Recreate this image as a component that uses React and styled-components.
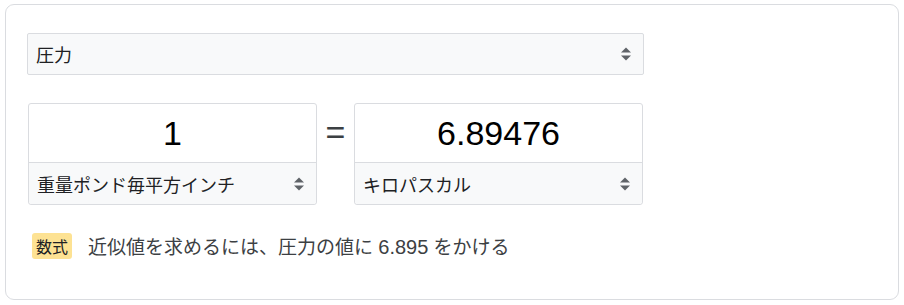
import React from "react"
import styled, { createGlobalStyle } from "styled-components"

const GlobalStyle = createGlobalStyle`
  body {
    margin: 0;
    background: #fff;
    font-family: "Liberation Sans", Arial, "Noto Sans CJK JP", sans-serif;
    color: #202124;
  }
`

const Card = styled.div`
  box-sizing: border-box;
  width: 894px;
  height: 296px;
  margin: 4px 0 0 5px;
  border: 1px solid #dadce0;
  border-radius: 9px;
  padding: 28px 21px 0 21px;
`

const SelectBox = styled.div`
  box-sizing: border-box;
  display: flex;
  align-items: center;
  justify-content: space-between;
  width: ${(p) => p.$width || "100%"};
  height: ${(p) => p.$height}px;
  padding: 0 12px 0 8px;
  background: #f8f9fa;
  border: 1px solid #dadce0;
  border-radius: ${(p) => (p.$flat ? "0 0 3px 3px" : "2px")};
  font-size: 18px;
  font-family: "Noto Sans CJK JP", sans-serif;
  color: #202124;
  ${(p) => p.$flat && "border: none; border-top: 1px solid #dadce0;"}
`

const Row = styled.div`
  display: flex;
  align-items: flex-start;
  margin-top: 28px;
  margin-left: 1px;
`

const UnitBox = styled.div`
  box-sizing: border-box;
  width: 289px;
  border: 1px solid #dadce0;
  border-radius: 3px;
  overflow: hidden;
`

const Value = styled.div`
  height: 58px;
  display: flex;
  align-items: center;
  justify-content: center;
  font-size: 34px;
  font-family: "Liberation Sans", Arial, sans-serif;
  color: #000;
`

const Equals = styled.div`
  width: 37px;
  height: 59px;
  display: flex;
  align-items: center;
  justify-content: center;
  font-size: 34px;
  color: #3c4043;
  font-family: "Liberation Sans", Arial, sans-serif;
`

const Formula = styled.div`
  display: flex;
  align-items: center;
  margin-top: 27px;
  margin-left: 5px;
  font-size: 19px;
  color: #3c4043;
`

const Badge = styled.span`
  display: inline-flex;
  align-items: center;
  justify-content: center;
  width: 40px;
  height: 26px;
  background: #fde293;
  border-radius: 3px;
  font-size: 16px;
  font-family: "Noto Sans CJK JP", sans-serif;
  color: #202124;
  margin-right: 16px;
`

const FormulaText = styled.span`
  font-family: "Liberation Sans", Arial, "Noto Sans CJK JP", sans-serif;
`

const Factor = styled.span`
  font-size: 20px;
`

const Arrows = () => (
  <svg width="10" height="14" viewBox="0 0 10 14">
    <path d="M0 5.5 L5 0.5 L10 5.5 Z" fill="#5f6368" />
    <path d="M0 8.5 L5 13.5 L10 8.5 Z" fill="#5f6368" />
  </svg>
)

const Unit = ({ value, unit }) => (
  <UnitBox>
    <Value>{value}</Value>
    <SelectBox $flat $height={42}>
      <span>{unit}</span>
      <Arrows />
    </SelectBox>
  </UnitBox>
)

export default function App() {
  return (
    <>
      <GlobalStyle />
      <Card>
        <SelectBox $width="617px" $height={42}>
          <span>圧力</span>
          <Arrows />
        </SelectBox>
        <Row>
          <Unit value="1" unit="重量ポンド毎平方インチ" />
          <Equals>=</Equals>
          <Unit value="6.89476" unit="キロパスカル" />
        </Row>
        <Formula>
          <Badge>数式</Badge>
          <FormulaText>
            近似値を求めるには、圧力の値に <Factor>6.895</Factor> をかける
          </FormulaText>
        </Formula>
      </Card>
    </>
  )
}
